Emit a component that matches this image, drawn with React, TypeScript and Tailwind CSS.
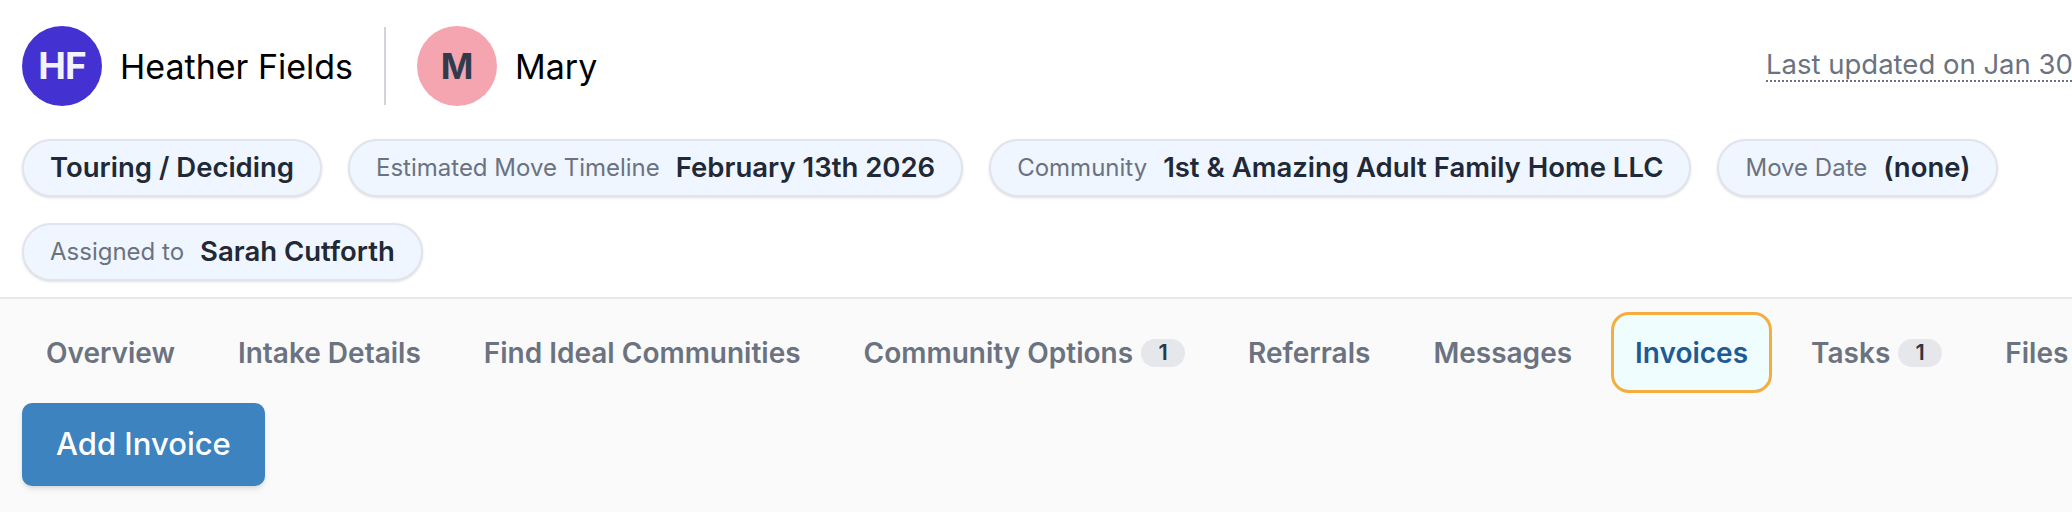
import React from "react";

type Chip = { label?: string; value: string };

const chips: Chip[] = [
  { value: "Touring / Deciding" },
  { label: "Estimated Move Timeline", value: "February 13th 2026" },
  { label: "Community", value: "1st & Amazing Adult Family Home LLC" },
  { label: "Move Date", value: "(none)" },
  { label: "Assigned to", value: "Sarah Cutforth" },
];

type Tab = { name: string; count?: number };

const tabs: Tab[] = [
  { name: "Overview" },
  { name: "Intake Details" },
  { name: "Find Ideal Communities" },
  { name: "Community Options", count: 1 },
  { name: "Referrals" },
  { name: "Messages" },
  { name: "Invoices" },
  { name: "Tasks", count: 1 },
  { name: "Files" },
];

export default function App() {
  const activeTab = "Invoices";

  return (
    <div className="w-[2072px] h-[512px] overflow-hidden bg-[#fafafa] font-['Inter','Noto_Sans',sans-serif]">
      {/* Lead header */}
      <div className="bg-white px-[22px] pt-[26px] pb-[16px] border-b-2 border-[#e5e7eb]">
        <div className="flex items-center h-[80px]">
          <div className="w-[80px] h-[80px] rounded-full bg-[#4332d1] flex items-center justify-center text-[#f3f2ff] text-[37px] font-bold tracking-tight">
            HF
          </div>
          <span className="ml-[18px] text-[34px] text-black">Heather Fields</span>
          <div className="mx-[31px] w-[2px] h-[78px] bg-[#d1d5db]" />
          <div className="w-[80px] h-[80px] rounded-full bg-[#f5a5b0] flex items-center justify-center text-[#323b4b] text-[35px] font-bold">
            M
          </div>
          <span className="ml-[18px] text-[34px] text-black">Mary</span>
          <div className="ml-auto -mr-[22px] w-[306px] overflow-hidden whitespace-nowrap self-start mt-[18px]">
            <span className="text-[27.5px] text-[#6b7280] underline decoration-dotted decoration-2 underline-offset-[6px]">
              Last updated on Jan 30, 2026
            </span>
          </div>
        </div>

        <div className="mt-[33px] flex flex-wrap gap-[26px]">
          {chips.map((c) => (
            <div
              key={c.value}
              className="h-[58px] px-[26px] flex items-center gap-[16px] rounded-full bg-[#eff6ff] border-2 border-[#e1e5eb] shadow-sm whitespace-nowrap"
            >
              {c.label && <span className="text-[24px] text-[#6b7280]">{c.label}</span>}
              <span className="text-[27.5px] font-semibold text-[#1f2937]">{c.value}</span>
            </div>
          ))}
        </div>
      </div>

      {/* Tabs */}
      <div className="px-[22px] pt-[13px] flex items-center gap-[15px] whitespace-nowrap">
        {tabs.map((t) => {
          const active = t.name === activeTab;
          return (
            <div
              key={t.name}
              className={`h-[81px] px-[21px] flex items-center gap-[8px] rounded-[18px] border-[3px] ${
                active ? "border-[#f5ad3d] bg-[#effdff] text-[#1f5a94]" : "border-transparent text-[#6b7280]"
              }`}
            >
              <span className="text-[28px] font-semibold">{t.name}</span>
              {t.count !== undefined && (
                <span className="w-[44px] h-[28px] rounded-full bg-[#e5e7eb] flex items-center justify-center text-[22px] font-semibold text-[#2d3748]">
                  {t.count}
                </span>
              )}
            </div>
          );
        })}
      </div>

      <div className="px-[22px] mt-[10px]">
        <button className="h-[83px] px-[34px] rounded-[10px] bg-[#3c83c0] text-white text-[31px] font-medium shadow-md">
          Add Invoice
        </button>
      </div>
    </div>
  );
}
